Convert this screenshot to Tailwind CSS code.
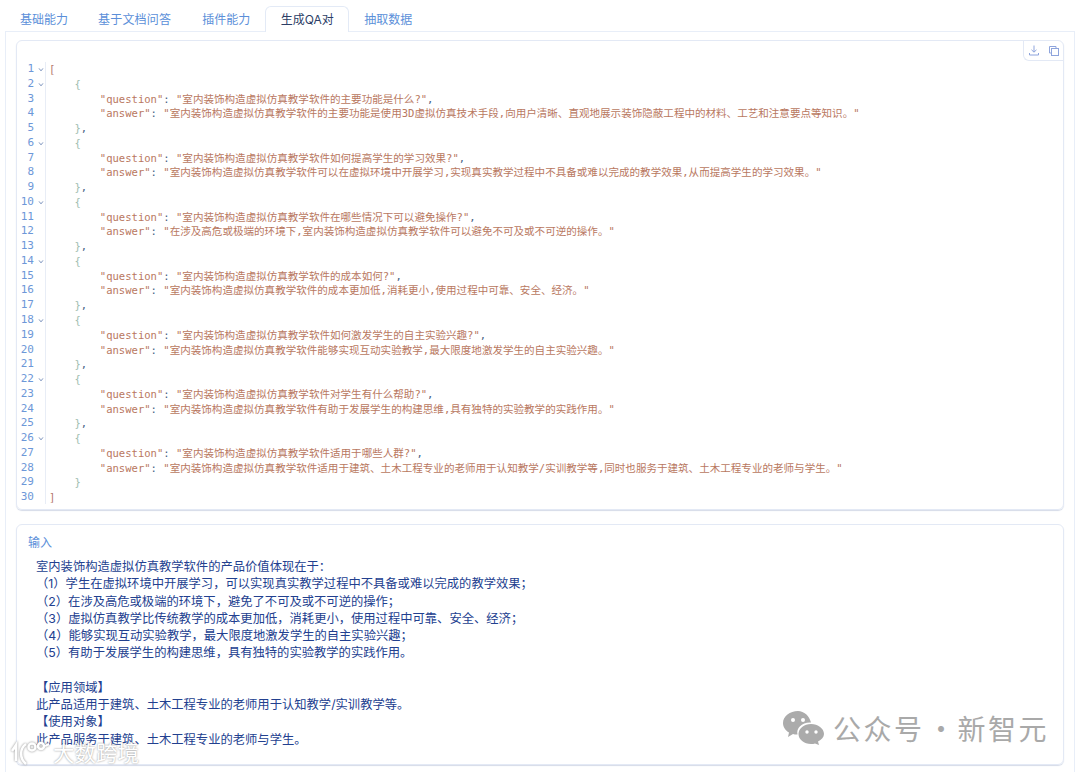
<!DOCTYPE html>
<html lang="en">
<head>
    <meta charset="UTF-8">
    <script src="https://cdn.jsdelivr.net/npm/@tailwindcss/browser@4"></script>
    <title>生成QA对</title>
</head>
<body class="bg-white w-[1080px] h-[772px] overflow-hidden relative font-['Inter','Noto_Sans_CJK_SC',sans-serif]">

    <!-- Tabs -->
    <nav class="flex h-[31px] pl-[5px] items-end text-[12px] text-[#5b8fd9]">
        <a class="h-[25px] px-[15px] leading-[28px]">基础能力</a>
        <a class="h-[25px] px-[15px] leading-[28px] tracking-[0.2px]">基于文档问答</a>
        <a class="h-[25px] px-[15px] leading-[28px] ml-[1px]">插件能力</a>
        <a class="h-[26px] w-[84px] text-center leading-[26px] text-[#2c3e66] bg-white border border-b-0 border-[#e3eaf6] rounded-t-[6px] relative top-[1px]">生成QA对</a>
        <a class="h-[25px] px-[15px] leading-[28px]">抽取数据</a>
    </nav>

    <!-- Panel -->
    <main class="w-[1070px] ml-[5px] h-[760px] border border-[#e8eef8] px-[10px] pt-[8px]">

        <!-- Code output -->
        <section class="relative h-[470px] border border-[#e3e9f5] rounded-[6px] shadow-[0_1px_1px_#d5dbe8] pt-[21px] flex">
            <div class="absolute top-0 right-0 w-[40px] h-[20px] flex items-center justify-center gap-[10px] border-l border-b border-[#e3e9f5] rounded-bl-[6px] rounded-tr-[6px] text-[#8ea4dc]">
                <svg width="10" height="11" viewBox="0 0 10 11" fill="none" stroke="currentColor" stroke-width="1"><path d="M5 0.5V7M2.5 4.8 5 7.2 7.5 4.8M0.5 8V10H9.500V8"/></svg>
                <svg width="10" height="10" viewBox="0 0 10 10" fill="none" stroke="currentColor" stroke-width="1"><rect x="2.500" y="2.500" width="7" height="7"/><path d="M2.500 7H.5V.5H7V2.500"/></svg>
            </div>

            <!-- Gutter -->
            <pre class="w-[28px] shrink-0 text-right pr-[11px] text-[#6d97d8] font-['DejaVu_Sans_Mono',monospace] text-[11px] leading-[14.76px]">1
2
3
4
5
6
7
8
9
10
11
12
13
14
15
16
17
18
19
20
21
22
23
24
25
26
27
28
29
30</pre>
            <!-- Fold markers -->
            <div class="absolute left-[21px] top-[21px] w-[6px] text-[#7b93bd]">
                <svg class="h-[14.76px]" width="6" viewBox="0 0 6 15" fill="none" stroke="currentColor"><path d="M1 6.500 3 9 5 6.500"/></svg>
                <svg class="h-[14.76px]" width="6" viewBox="0 0 6 15" fill="none" stroke="currentColor"><path d="M1 6.500 3 9 5 6.500"/></svg>
                <svg class="h-[14.76px] mt-[44.28px]" width="6" viewBox="0 0 6 15" fill="none" stroke="currentColor"><path d="M1 6.500 3 9 5 6.500"/></svg>
                <svg class="h-[14.76px] mt-[44.28px]" width="6" viewBox="0 0 6 15" fill="none" stroke="currentColor"><path d="M1 6.500 3 9 5 6.500"/></svg>
                <svg class="h-[14.76px] mt-[44.28px]" width="6" viewBox="0 0 6 15" fill="none" stroke="currentColor"><path d="M1 6.500 3 9 5 6.500"/></svg>
                <svg class="h-[14.76px] mt-[44.28px]" width="6" viewBox="0 0 6 15" fill="none" stroke="currentColor"><path d="M1 6.500 3 9 5 6.500"/></svg>
                <svg class="h-[14.76px] mt-[44.28px]" width="6" viewBox="0 0 6 15" fill="none" stroke="currentColor"><path d="M1 6.500 3 9 5 6.500"/></svg>
                <svg class="h-[14.76px] mt-[44.28px]" width="6" viewBox="0 0 6 15" fill="none" stroke="currentColor"><path d="M1 6.500 3 9 5 6.500"/></svg>
            </div>

            <!-- Code -->
            <pre class="flex-1 border-l border-[#e8edf6] pl-[3px] h-[442px] text-[#b9785f] font-['DejaVu_Sans_Mono','Noto_Sans_CJK_SC',monospace] text-[10.55px] leading-[14.76px]"><span class="text-[#b5786c]">[</span>
    <span class="text-[#a0bdb0]">{</span>
        "question"<span class="text-[#4a6285]">:</span> "室内装饰构造虚拟仿真教学软件的主要功能是什么?"<span class="text-[#4a6285]">,</span>
        "answer"<span class="text-[#4a6285]">:</span> "室内装饰构造虚拟仿真教学软件的主要功能是使用3D虚拟仿真技术手段,向用户清晰、直观地展示装饰隐蔽工程中的材料、工艺和注意要点等知识。"
    <span class="text-[#a0bdb0]">}</span><span class="text-[#4a6285]">,</span>
    <span class="text-[#a0bdb0]">{</span>
        "question"<span class="text-[#4a6285]">:</span> "室内装饰构造虚拟仿真教学软件如何提高学生的学习效果?"<span class="text-[#4a6285]">,</span>
        "answer"<span class="text-[#4a6285]">:</span> "室内装饰构造虚拟仿真教学软件可以在虚拟环境中开展学习,实现真实教学过程中不具备或难以完成的教学效果,从而提高学生的学习效果。"
    <span class="text-[#a0bdb0]">}</span><span class="text-[#4a6285]">,</span>
    <span class="text-[#a0bdb0]">{</span>
        "question"<span class="text-[#4a6285]">:</span> "室内装饰构造虚拟仿真教学软件在哪些情况下可以避免操作?"<span class="text-[#4a6285]">,</span>
        "answer"<span class="text-[#4a6285]">:</span> "在涉及高危或极端的环境下,室内装饰构造虚拟仿真教学软件可以避免不可及或不可逆的操作。"
    <span class="text-[#a0bdb0]">}</span><span class="text-[#4a6285]">,</span>
    <span class="text-[#a0bdb0]">{</span>
        "question"<span class="text-[#4a6285]">:</span> "室内装饰构造虚拟仿真教学软件的成本如何?"<span class="text-[#4a6285]">,</span>
        "answer"<span class="text-[#4a6285]">:</span> "室内装饰构造虚拟仿真教学软件的成本更加低,消耗更小,使用过程中可靠、安全、经济。"
    <span class="text-[#a0bdb0]">}</span><span class="text-[#4a6285]">,</span>
    <span class="text-[#a0bdb0]">{</span>
        "question"<span class="text-[#4a6285]">:</span> "室内装饰构造虚拟仿真教学软件如何激发学生的自主实验兴趣?"<span class="text-[#4a6285]">,</span>
        "answer"<span class="text-[#4a6285]">:</span> "室内装饰构造虚拟仿真教学软件能够实现互动实验教学,最大限度地激发学生的自主实验兴趣。"
    <span class="text-[#a0bdb0]">}</span><span class="text-[#4a6285]">,</span>
    <span class="text-[#a0bdb0]">{</span>
        "question"<span class="text-[#4a6285]">:</span> "室内装饰构造虚拟仿真教学软件对学生有什么帮助?"<span class="text-[#4a6285]">,</span>
        "answer"<span class="text-[#4a6285]">:</span> "室内装饰构造虚拟仿真教学软件有助于发展学生的构建思维,具有独特的实验教学的实践作用。"
    <span class="text-[#a0bdb0]">}</span><span class="text-[#4a6285]">,</span>
    <span class="text-[#a0bdb0]">{</span>
        "question"<span class="text-[#4a6285]">:</span> "室内装饰构造虚拟仿真教学软件适用于哪些人群?"<span class="text-[#4a6285]">,</span>
        "answer"<span class="text-[#4a6285]">:</span> "室内装饰构造虚拟仿真教学软件适用于建筑、土木工程专业的老师用于认知教学/实训教学等,同时也服务于建筑、土木工程专业的老师与学生。"
    <span class="text-[#a0bdb0]">}</span>
<span class="text-[#b5786c]">]</span></pre>
        </section>

        <!-- Input -->
        <section class="mt-[14px] h-[241px] border border-[#e3e9f5] rounded-[6px] shadow-[0_1px_1px_#d5dbe8] pl-[11px] pt-[9px]">
            <h3 class="text-[12px] leading-[18px] text-[#5b8fd9]">输入</h3>
            <div class="mt-[6px] pl-[8px] text-[12.3px] leading-[17.25px] text-[#22408f] [text-spacing-trim:space-all]">
                <p>室内装饰构造虚拟仿真教学软件的产品价值体现在于：</p>
                <p>（1）学生在虚拟环境中开展学习，可以实现真实教学过程中不具备或难以完成的教学效果；</p>
                <p>（2）在涉及高危或极端的环境下，避免了不可及或不可逆的操作；</p>
                <p>（3）虚拟仿真教学比传统教学的成本更加低，消耗更小，使用过程中可靠、安全、经济；</p>
                <p>（4）能够实现互动实验教学，最大限度地激发学生的自主实验兴趣；</p>
                <p>（5）有助于发展学生的构建思维，具有独特的实验教学的实践作用。</p>
                <p class="h-[17.25px]"></p>
                <p>【应用领域】</p>
                <p>此产品适用于建筑、土木工程专业的老师用于认知教学/实训教学等。</p>
                <p>【使用对象】</p>
                <p>此产品服务于建筑、土木工程专业的老师与学生。</p>
            </div>
        </section>
    </main>

    <!-- Watermarks -->
    <div class="absolute left-[783px] top-[711px] flex items-center text-[#a9a9a9] font-['Noto_Sans_CJK_SC',sans-serif] text-[28px] leading-[34px] tracking-[2.5px] whitespace-nowrap">
        <svg width="42" height="34" viewBox="0 0 42 34" fill="#ababab" class="mr-[8px]">
            <path d="M15 0C7 0 0 5 0 12c0 4 2.500 7.500 6 9.500L5 26l5-3c1.500.4 3 .6 4.500.5C13 17 19 11 28 11.500 26.500 5 21 0 15 0Z"/>
            <path d="M28 13c-7 0-12.500 4.500-12.500 10S21 33 28 33c1.500 0 3-.2 4-.6l4 1.600-1-3.500c3.500-2 6-4.500 6-7.500 0-5.500-6-10-13-10Z"/>
            <circle cx="10" cy="9" r="2" fill="#fff"/><circle cx="20" cy="9" r="2" fill="#fff"/>
            <circle cx="24" cy="21" r="1.700" fill="#fff"/><circle cx="33" cy="21" r="1.700" fill="#fff"/>
        </svg>
        <span>公众号</span>
        <span class="w-[33px] text-center tracking-normal">·</span>
        <span>新智元</span>
    </div>
    <div class="absolute left-[10px] top-[738px] flex items-center gap-[3px] text-white [text-shadow:0_0_2px_#8a8a8a]">
        <svg width="40" height="27" viewBox="0 0 40 27" fill="none" stroke="#fff" stroke-width="2.500" class="drop-shadow-[0_0_1px_#888]">
            <path d="M2 12 6 6V22M16 5C10 9 9 19 16 25"/>
            <circle cx="22" cy="8" r="3.500"/><circle cx="31" cy="7" r="3"/><path d="M35 7 39 5"/>
        </svg>
        <span class="text-[21.5px] leading-[28px] font-['Noto_Sans_CJK_SC',sans-serif]">大数跨境</span>
    </div>
</body>
</html>
